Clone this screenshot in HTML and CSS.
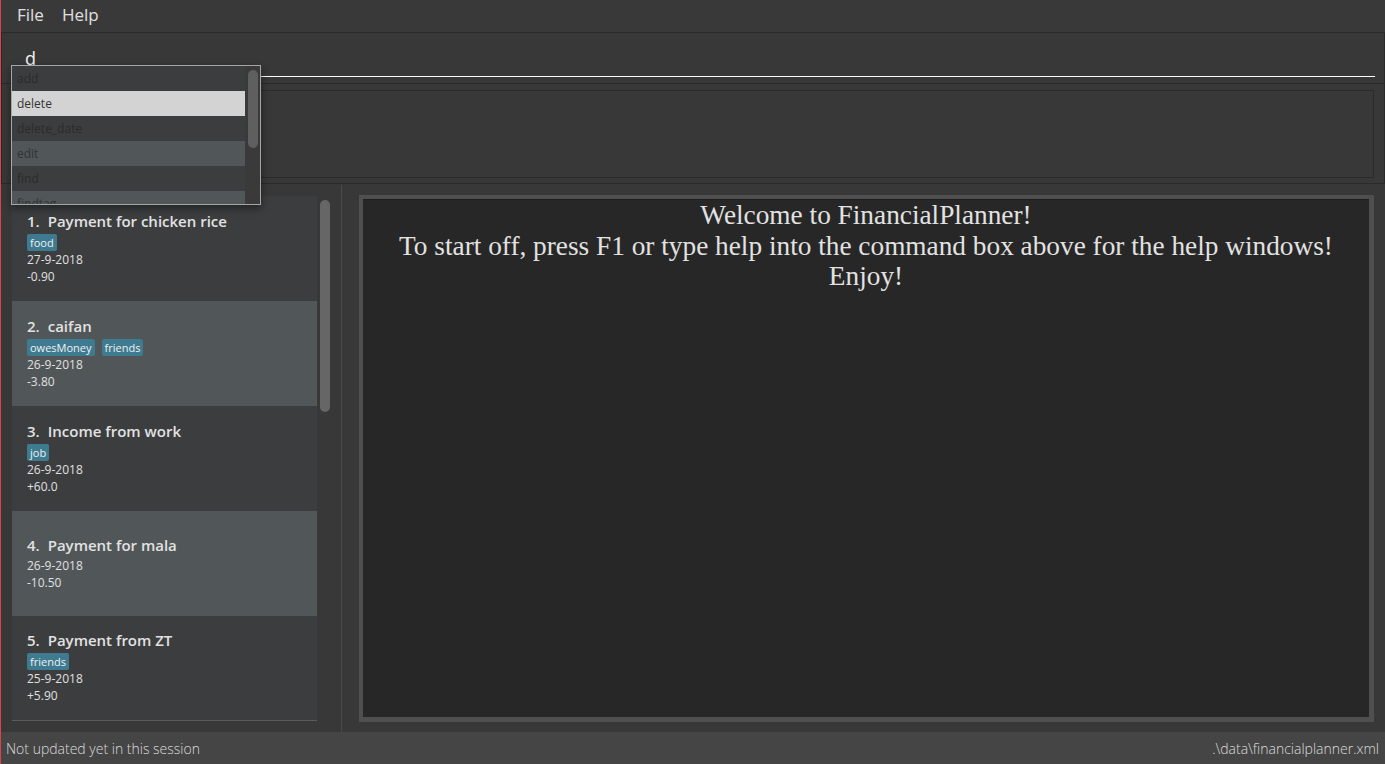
FILE: index.html
```html
<!DOCTYPE html>
<html>
<head>
<meta charset="utf-8">
<link rel="stylesheet" href="styles.css">
</head>
<body>
<div class="app">
  <div class="menubar">
    <span class="menu-item">File</span>
    <span class="menu-item">Help</span>
  </div>
  <div class="command-pane">
    <div class="command-box"><span class="cmd-text">d</span></div>
    <div class="autocomplete">
      <div class="ac-list">
        <div class="ac-item">add</div>
        <div class="ac-item selected">delete</div>
        <div class="ac-item">delete_date</div>
        <div class="ac-item alt">edit</div>
        <div class="ac-item">find</div>
        <div class="ac-item alt">findtag</div>
      </div>
      <div class="ac-scroll"><div class="ac-thumb"></div></div>
    </div>
  </div>
  <div class="result-pane"><div class="result-box"></div></div>
  <div class="main">
    <div class="list-pane">
      <div class="list">
        <div class="card">
          <div class="title"><span class="idx">1.</span>Payment for chicken rice</div>
          <div class="tags"><span class="tag">food</span></div>
          <div class="line">27-9-2018</div>
          <div class="line">-0.90</div>
        </div>
        <div class="card alt">
          <div class="title"><span class="idx">2.</span>caifan</div>
          <div class="tags"><span class="tag">owesMoney</span><span class="tag">friends</span></div>
          <div class="line">26-9-2018</div>
          <div class="line">-3.80</div>
        </div>
        <div class="card">
          <div class="title"><span class="idx">3.</span>Income from work</div>
          <div class="tags"><span class="tag">job</span></div>
          <div class="line">26-9-2018</div>
          <div class="line">+60.0</div>
        </div>
        <div class="card alt">
          <div class="title"><span class="idx">4.</span>Payment for mala</div>
          <div class="line">26-9-2018</div>
          <div class="line">-10.50</div>
        </div>
        <div class="card last">
          <div class="title"><span class="idx">5.</span>Payment from ZT</div>
          <div class="tags"><span class="tag">friends</span></div>
          <div class="line">25-9-2018</div>
          <div class="line">+5.90</div>
        </div>
      </div>
      <div class="list-scroll"><div class="list-thumb"></div></div>
    </div>
    <div class="browser-pane">
      <div class="browser">
        <p class="welcome">Welcome to FinancialPlanner!<br>To start off, press F1 or type help into the command box above for the help windows!<br>Enjoy!</p>
      </div>
    </div>
  </div>
  <div class="statusbar">
    <span class="status-left">Not updated yet in this session</span>
    <span class="status-right">.\data\financialplanner.xml</span>
  </div>
</div>
</body>
</html>
```

FILE: styles.css
```css
html, body {
  margin: 0;
  padding: 0;
  background: #383838;
}

.app {
  width: 1385px;
  height: 764px;
  box-sizing: border-box;
  border-left: 1px solid #d9434e;
  display: flex;
  flex-direction: column;
  font-family: "Open Sans", "Noto Sans", sans-serif;
  color: #dddddd;
  overflow: hidden;
  position: relative;
}

.menubar {
  height: 32px;
  border-bottom: 1px solid #2a2a2a;
  background: #393939;
  display: flex;
  align-items: center;
  padding-left: 16px;
  gap: 18px;
  flex: none;
}

.menu-item {
  font-size: 17px;
  color: #e0e0e0;
  line-height: 24px;
  margin-top: -3px;
}

.command-pane {
  height: 50px;
  border-bottom: 1px solid #2a2a2a;
  border-right: 1px solid #2a2a2a;
  padding: 0 9px 0 11px;
  position: relative;
  flex: none;
  border-left: 1px solid #2a2a2a;
}

.command-box {
  margin-top: 13px;
  height: 31px;
  border-bottom: 1px solid #ffffff;
  padding-left: 12px;
  box-sizing: border-box;
}

.cmd-text {
  font-size: 18px;
  line-height: 24px;
  color: #f2f2f2;
}

.autocomplete {
  position: absolute;
  left: 9px;
  top: 32px;
  width: 250px;
  height: 140px;
  box-sizing: border-box;
  border: 1px solid #a6a6a6;
  background: #3a3a3a;
  display: flex;
  z-index: 10;
  box-shadow: 0 3px 8px rgba(0, 0, 0, 0.45);
  overflow: hidden;
}

.ac-list {
  width: 233px;
  flex: none;
  overflow: hidden;
}

.ac-item {
  height: 25px;
  line-height: 26px;
  padding-left: 5px;
  font-size: 12px;
  background: #3c3d3f;
  color: #2b2b2b;
}

.ac-item.alt {
  background: #515658;
  color: #303335;
}

.ac-item.selected {
  background: #d3d3d3;
  color: #333333;
}

.ac-scroll {
  flex: 1;
  background: #3a3a3a;
  padding: 4px 2px 0 3px;
}

.ac-thumb {
  width: 10px;
  height: 78px;
  border-radius: 5px;
  background: #5f5f5f;
}

.result-pane {
  border-bottom: 1px solid #2a2a2a;
  border-right: 1px solid #2a2a2a;
  border-left: 1px solid #2a2a2a;
  padding: 6px 10px 5px 11px;
  box-sizing: border-box;
  height: 100px;
  flex: none;
}

.result-box {
  height: 100%;
  box-sizing: border-box;
  border: 1px solid #2b2b2b;
}

.main {
  flex: 1;
  display: flex;
  min-height: 0;
}

.list-pane {
  width: 341px;
  flex: none;
  border-right: 1px solid #4a4a4a;
  display: flex;
  padding: 11px 0 0 11px;
  box-sizing: border-box;
  margin: 1px 0 0 0;
}

.list {
  width: 305px;
  flex: none;
  display: flex;
  flex-direction: column;
}

.card {
  height: 105px;
  flex: none;
  background: #3c3d3f;
  display: flex;
  flex-direction: column;
  justify-content: center;
  padding-left: 15px;
  box-sizing: border-box;
}

.card.alt {
  background: #515658;
}

.card.last {
  border-bottom: 1px solid #5a5c5e;
}

.title {
  font-size: 15px;
  font-weight: 600;
  line-height: 20px;
  color: #e2e2e2;
  margin-bottom: 2px;
  margin-top: -2px;
}

.idx {
  margin-right: 8px;
}

.tags {
  display: flex;
  gap: 7px;
  margin-top: 1px;
}

.tag {
  background: #3e7b91;
  color: #f0f0f0;
  font-size: 11px;
  line-height: 17px;
  height: 17px;
  padding: 0 3px;
  border-radius: 2px;
}

.line {
  font-size: 12px;
  line-height: 17px;
  color: #e0e0e0;
}

.list-scroll {
  margin-left: 3px;
  width: 10px;
  padding-top: 4px;
}

.list-thumb {
  width: 10px;
  height: 212px;
  border-radius: 5px;
  background: #666666;
}

.browser-pane {
  flex: 1;
  padding: 11px 11px 10px 17px;
  display: flex;
}

.browser {
  flex: 1;
  border-style: solid;
  border-color: #4f4f4f;
  border-width: 4px 5px 5px 4px;
  background: #272727;
  box-shadow: inset 0 1px 0 #1e1e1e;
}

.welcome {
  margin: 1px 0 0 0;
  text-align: center;
  font-family: "Liberation Serif", serif;
  font-size: 27.3px;
  line-height: 30.5px;
  color: #e2e2e2;
}

.statusbar {
  height: 32px;
  flex: none;
  background: #454545;
  display: flex;
  align-items: center;
  justify-content: space-between;
  padding: 0 6px 0 5px;
  font-size: 14px;
  font-weight: 300;
  color: #dcdcdc;
}
```
